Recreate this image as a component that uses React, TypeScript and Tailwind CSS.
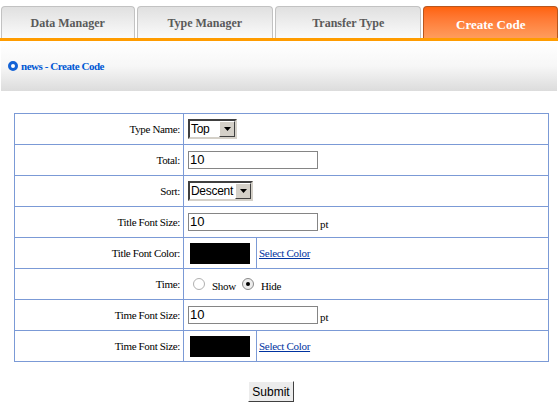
import * as React from "react";

const serif = { fontFamily: '"Liberation Serif", "Times New Roman", serif' };
const sans = { fontFamily: '"Liberation Sans", Arial, sans-serif' };

function Tab({ label, width, active }: { label: string; width: string; active?: boolean }) {
  if (active) {
    return (
      <div
        className={`${width} h-[32px] flex items-center justify-center pt-[5px] rounded-t-[4px] border border-b-0 border-[#b8561e] bg-gradient-to-b from-[#ff6208] to-[#ff9c5c] text-white text-[13px] font-bold`}
        style={serif}
      >
        {label}
      </div>
    );
  }
  return (
    <div
      className={`${width} h-[32px] flex items-center justify-center rounded-t-[4px] border border-b-0 border-[#c2c2c2] bg-gradient-to-b from-[#e0e0e0] to-[#fbfbfb] text-[#5a5a5a] text-[12px] font-bold`}
      style={serif}
    >
      {label}
    </div>
  );
}

function Row({ label, children }: { label: string; children: React.ReactNode }) {
  return (
    <div className="flex h-[31px] border-b border-[#7b9ad6]">
      <div
        className="w-[168px] flex items-center justify-end pr-[3px] text-[11px] tracking-[-0.35px] text-black"
        style={serif}
      >
        {label}
      </div>
      <div className="flex-1 flex items-center border-l border-[#7b9ad6] pl-[4px]">{children}</div>
    </div>
  );
}

function FakeSelect({ value, width }: { value: string; width: string }) {
  return (
    <div
      className={`${width} h-[20px] flex items-center bg-white border-2 border-t-[#404040] border-l-[#404040] border-b-[#d4d0c8] border-r-[#d4d0c8]`}
    >
      <span
        className="flex-1 pl-[1px] text-[12px] tracking-[-0.3px] text-black leading-none whitespace-nowrap overflow-hidden"
        style={sans}
      >
        {value}
      </span>
      <div className="w-[16px] h-[16px] shrink-0 flex items-center justify-center bg-[#d4d0c8] border border-t-white border-l-white border-b-[#404040] border-r-[#404040]">
        <svg width="7" height="4" viewBox="0 0 7 4">
          <path d="M0 0h7L3.5 4z" fill="#000" />
        </svg>
      </div>
    </div>
  );
}

function TextBox({ value }: { value: string }) {
  return (
    <input
      readOnly
      value={value}
      className="w-[130px] h-[18px] border border-[#858585] bg-white px-[1px] text-[13px] text-black outline-none"
      style={sans}
    />
  );
}

function Radio({ checked }: { checked?: boolean }) {
  return (
    <div
      className={`w-[12px] h-[12px] rounded-full border flex items-center justify-center ${
        checked ? "border-[#8a8a8a] bg-[#ececec]" : "border-[#b0b0b0] bg-white"
      }`}
    >
      {checked && <div className="w-[4px] h-[4px] rounded-full bg-black" />}
    </div>
  );
}

function ColorPick() {
  return (
    <div className="flex items-stretch h-full -ml-[4px]">
      <div className="flex items-center pl-[6px] pr-[6px] border-r border-[#7b9ad6]">
        <div className="w-[60px] h-[21px] bg-black" />
      </div>
      <a
        href="#"
        className="flex items-center pl-[2px] text-[11px] tracking-[-0.3px] text-[#0033a0] underline"
        style={serif}
      >
        Select Color
      </a>
    </div>
  );
}

export default function App() {
  return (
    <div className="w-[558px] h-[419px] bg-white overflow-hidden">
      <div className="flex items-end pt-[6px] pl-[1px] gap-[2px]">
        <Tab label="Data Manager" width="w-[134px]" />
        <Tab label="Type Manager" width="w-[137px]" />
        <Tab label="Transfer Type" width="w-[147px]" />
        <Tab label="Create Code" width="w-[135px]" active />
      </div>
      <div className="h-[3px] bg-[#ff9c00]" />
      <div className="mx-[1px] h-[50px] flex items-center gap-[3px] pl-[7px] bg-gradient-to-b from-white via-[#f7f7f7] to-[#dcdcdc]">
        <div className="w-[10px] h-[10px] rounded-full border-[3px] border-[#1463d6] bg-white" />
        <span className="text-[11px] font-bold tracking-[-0.45px] text-[#0058d4]" style={serif}>
          news - Create Code
        </span>
      </div>

      <div className="ml-[14px] mt-[22px] w-[535px] border border-b-0 border-[#7b9ad6]">
        <Row label="Type Name:">
          <FakeSelect value="Top" width="w-[49px]" />
        </Row>
        <Row label="Total:">
          <TextBox value="10" />
        </Row>
        <Row label="Sort:">
          <FakeSelect value="Descent" width="w-[65px]" />
        </Row>
        <Row label="Title Font Size:">
          <TextBox value="10" />
          <span className="ml-[2px] mt-[5px] text-[11px] text-black" style={serif}>pt</span>
        </Row>
        <Row label="Title Font Color:">
          <ColorPick />
        </Row>
        <Row label="Time:">
          <div className="flex items-center pl-[5px]">
            <Radio />
            <span className="ml-[7px] mt-[4px] text-[11px] tracking-[-0.3px] text-black" style={serif}>Show</span>
            <div className="ml-[6px]">
              <Radio checked />
            </div>
            <span className="ml-[7px] mt-[4px] text-[11px] tracking-[-0.3px] text-black" style={serif}>Hide</span>
          </div>
        </Row>
        <Row label="Time Font Size:">
          <TextBox value="10" />
          <span className="ml-[2px] mt-[5px] text-[11px] text-black" style={serif}>pt</span>
        </Row>
        <Row label="Time Font Size:">
          <ColorPick />
        </Row>
      </div>

      <div className="flex mt-[19px] pl-[248px]">
        <button
          className="w-[46px] h-[21px] bg-[#ececec] border border-t-white border-l-white border-b-[#404040] border-r-[#404040] text-[12px] text-black"
          style={sans}
        >
          Submit
        </button>
      </div>
    </div>
  );
}
